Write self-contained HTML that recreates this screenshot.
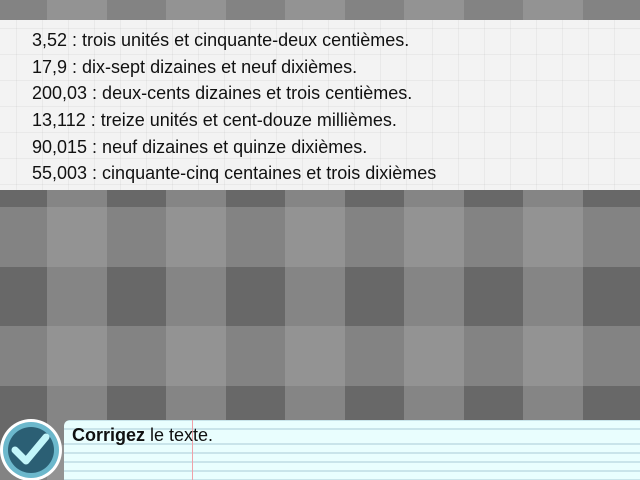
<!DOCTYPE html>
<html><head><meta charset="utf-8"><style>
html,body{margin:0;padding:0;width:640px;height:480px;overflow:hidden;position:relative;font-family:"Liberation Sans",sans-serif;}
.bg{position:absolute;inset:0;}
.panel{position:absolute;left:0;top:20px;width:640px;height:170px;background-color:#f3f3f3;
background-image:linear-gradient(90deg,rgba(0,0,0,0.04) 1px,transparent 1px),linear-gradient(rgba(0,0,0,0.04) 1px,transparent 1px);
background-size:26px 26px;background-position:16px 8px;}
.panel p{margin:0;position:absolute;left:32px;font-size:18px;color:#111;white-space:nowrap;}
.note{position:absolute;left:64px;top:420px;width:576px;height:60px;border-top-left-radius:6px;background-color:#e9fefe;
background-image:repeating-linear-gradient(to bottom,transparent 0,transparent 7px,#c9e4ea 7px,#c9e4ea 9px);background-position:0 16px;}
.note .m{position:absolute;left:128px;top:0;width:1px;height:60px;background:#f0a0a8;}
.note .t{position:absolute;left:8px;top:5px;font-size:18px;color:#111;}
</style></head><body>
<svg class="bg" width="640" height="480">
<defs>
<pattern id="p" x="47" y="207" width="119" height="119" patternUnits="userSpaceOnUse">
<rect x="0" y="0" width="60" height="60" fill="#939393"/>
<rect x="60" y="0" width="59" height="60" fill="#838383"/>
<rect x="0" y="60" width="60" height="59" fill="#858585"/>
<rect x="60" y="60" width="59" height="59" fill="#686868"/>
</pattern>
</defs>
<rect width="640" height="480" fill="url(#p)"/>
</svg>
<div class="panel">
<p style="top:10px">3,52 : trois unités et cinquante-deux centièmes.</p>
<p style="top:37px">17,9 : dix-sept dizaines et neuf dixièmes.</p>
<p style="top:63px">200,03 : deux-cents dizaines et trois centièmes.</p>
<p style="top:90px">13,112 : treize unités et cent-douze millièmes.</p>
<p style="top:117px">90,015 : neuf dizaines et quinze dixièmes.</p>
<p style="top:143px">55,003 : cinquante-cinq centaines et trois dixièmes</p>
</div>
<div class="note"><div class="m"></div><div class="t"><b>Corrigez</b> le texte.</div></div>
<svg style="position:absolute;left:0;top:419px" width="64" height="62">
<circle cx="31" cy="31" r="31" fill="#fff"/>
<circle cx="31" cy="31" r="28" fill="#6cb8cc"/>
<circle cx="31" cy="31" r="23" fill="#2b5f74"/>
<path d="M15 31 L26 42 L46 18" fill="none" stroke="#c2f6fa" stroke-width="7" stroke-linecap="round" stroke-linejoin="round"/>
</svg>
</body></html>
